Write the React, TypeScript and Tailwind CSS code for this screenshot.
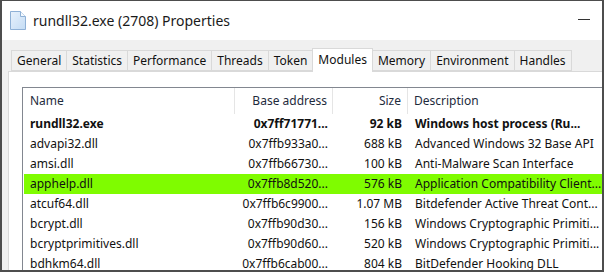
const tabs = [
  "General",
  "Statistics",
  "Performance",
  "Threads",
  "Token",
  "Modules",
  "Memory",
  "Environment",
  "Handles",
];

const modules = [
  { name: "rundll32.exe", base: "0x7ff71771...", size: "92 kB", desc: "Windows host process (Ru...", bold: true },
  { name: "advapi32.dll", base: "0x7ffb933a0...", size: "688 kB", desc: "Advanced Windows 32 Base API" },
  { name: "amsi.dll", base: "0x7ffb66730...", size: "100 kB", desc: "Anti-Malware Scan Interface" },
  { name: "apphelp.dll", base: "0x7ffb8d520...", size: "576 kB", desc: "Application Compatibility Client...", hit: true },
  { name: "atcuf64.dll", base: "0x7ffb6c9900...", size: "1.07 MB", desc: "Bitdefender Active Threat Cont..." },
  { name: "bcrypt.dll", base: "0x7ffb90d30...", size: "156 kB", desc: "Windows Cryptographic Primiti..." },
  { name: "bcryptprimitives.dll", base: "0x7ffb90d60...", size: "520 kB", desc: "Windows Cryptographic Primiti..." },
  { name: "bdhkm64.dll", base: "0x7ffb6cab00...", size: "804 kB", desc: "BitDefender Hooking DLL" },
];

const FileIcon = () => (
  <svg width="16" height="19" viewBox="0 0 16 19">
    <defs>
      <linearGradient id="pg" x1="0" y1="0" x2="1" y2="1">
        <stop offset="0" stopColor="#e8f2fc" />
        <stop offset="1" stopColor="#c4dcf4" />
      </linearGradient>
    </defs>
    <path d="M0.5 0.5 H10.5 L15.5 5.5 V18.5 H0.5 Z" fill="url(#pg)" stroke="#8fb1d6" />
    <path d="M10.5 0.5 V5.5 H15.5" fill="#f4f9fe" stroke="#8fb1d6" />
  </svg>
);

const App = () => {
  return (
    <div
      className="w-[604px] h-[272px] overflow-hidden bg-[#f0f0f0] border-t border-l-2 border-r-2 border-b-2 border-[#4d4d4d] flex flex-col text-[#111]"
      style={{ fontFamily: '"Noto Sans", "Open Sans", sans-serif' }}
    >
      {/* title bar */}
      <div className="h-[39px] shrink-0 bg-white flex items-center pl-[8px] pr-[12px]">
        <FileIcon />
        <span className="ml-[7px] text-[14px] text-[#1a1a1a] leading-none">rundll32.exe (2708) Properties</span>
        <span className="ml-auto w-[12px] h-[1px] bg-[#333] mb-[2px]" />
      </div>

      {/* tabs */}
      <div className="flex items-end pl-[9px] pt-[7px] h-[31px] shrink-0">
        {tabs.map((t) =>
          t === "Modules" ? (
            <div
              key={t}
              className="h-[24px] px-[5px] -mb-px -ml-px z-10 bg-white border border-b-0 border-[#d9d9d9] flex items-start pt-[2px] text-[12px]"
            >
              {t}
            </div>
          ) : (
            <div
              key={t}
              className="h-[21px] px-[5px] bg-[#f0f0f0] border border-[#d9d9d9] -ml-px first:ml-0 flex items-center text-[12px]"
            >
              {t}
            </div>
          )
        )}
      </div>

      {/* page */}
      <div className="flex-1 bg-white border-t border-l border-[#d9d9d9] ml-[6px] pl-[13px] pt-[15px] min-h-0">
        <div className="h-full border-t border-l border-[#828790] overflow-hidden text-[12px]">
          <div className="flex h-[26px] items-center text-[#1e2b3c] whitespace-nowrap">
            <div className="w-[212px] shrink-0 pl-[7px] h-full flex items-center border-r border-[#e5e5e5]">Name</div>
            <div className="w-[98px] shrink-0 pr-[5px] h-full flex items-center justify-end border-r border-[#e5e5e5]">
              Base address
            </div>
            <div className="w-[75px] shrink-0 pr-[6px] h-full flex items-center justify-end border-r border-[#e5e5e5]">
              Size
            </div>
            <div className="shrink-0 pl-[6px]">Description</div>
          </div>
          {modules.map((m) => (
            <div
              key={m.name}
              className={`flex h-[20px] items-center whitespace-nowrap ml-px ${m.hit ? "bg-[#7ffc00]" : ""} ${m.bold ? "font-bold" : ""}`}
            >
              <div className="w-[211px] shrink-0 pl-[6px]">{m.name}</div>
              <div className="w-[98px] shrink-0 pr-[5px] text-right">{m.base}</div>
              <div className="w-[75px] shrink-0 pr-[6px] text-right">{m.size}</div>
              <div className="shrink-0 pl-[7px]">{m.desc}</div>
            </div>
          ))}
        </div>
      </div>
    </div>
  );
};

export default App;
